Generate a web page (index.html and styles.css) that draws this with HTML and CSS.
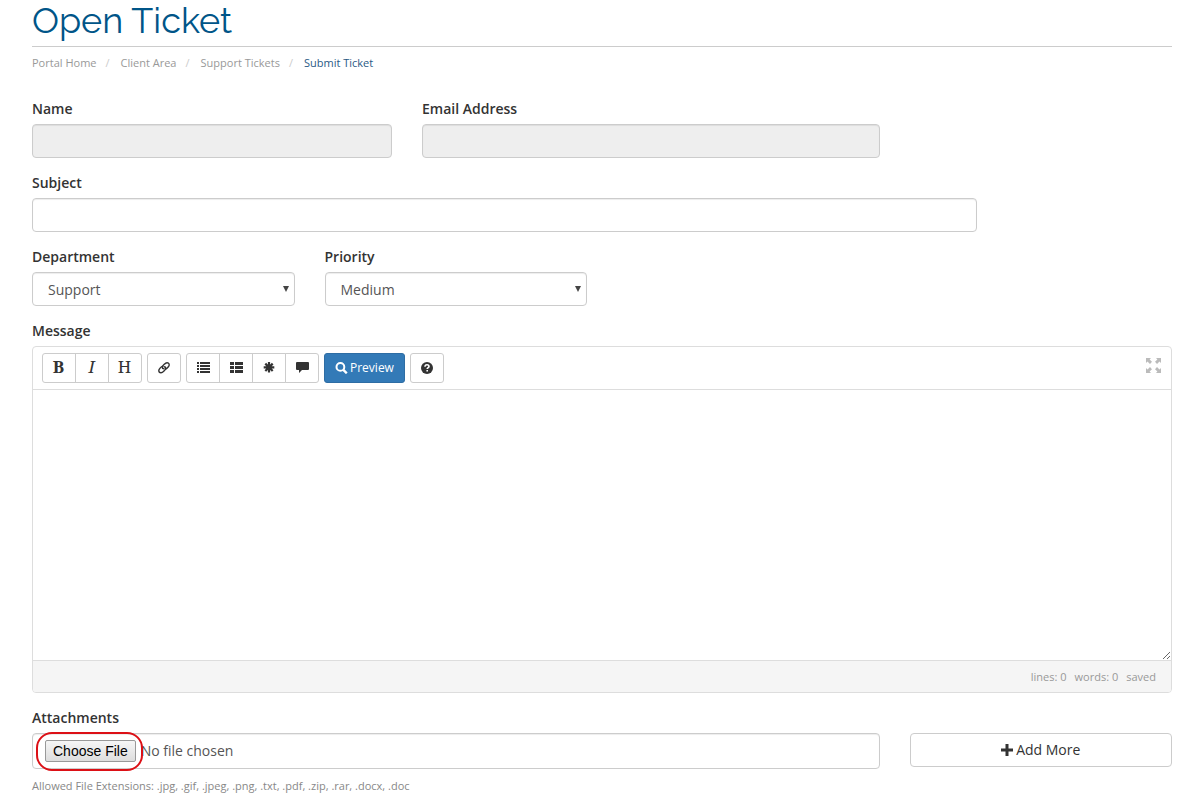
FILE: index.html
```html
<!DOCTYPE html>
<html lang="en">
<head>
    <meta charset="UTF-8">
    <meta name="viewport" content="width=device-width, initial-scale=1.0">
    <title>Open Ticket</title>
    <link rel="stylesheet" href="styles.css">
</head>
<body>

    <header class="page-header">
        <h1>Open Ticket</h1>
        <ol class="breadcrumb">
            <li><a href="#">Portal Home</a></li>
            <li><a href="#">Client Area</a></li>
            <li><a href="#">Support Tickets</a></li>
            <li class="active">Submit Ticket</li>
        </ol>
    </header>

    <form class="ticket-form">
        <div class="row">
            <div class="col-4">
                <label for="name">Name</label>
                <input type="text" id="name" class="form-control" disabled>
            </div>
            <div class="col-5">
                <label for="email">Email Address</label>
                <input type="email" id="email" class="form-control" disabled>
            </div>
        </div>

        <div class="row">
            <div class="col-10">
                <label for="subject">Subject</label>
                <input type="text" id="subject" class="form-control">
            </div>
        </div>

        <div class="row">
            <div class="col-3">
                <label for="department">Department</label>
                <div class="select">
                    <select id="department" class="form-control">
                        <option>Support</option>
                    </select>
                </div>
            </div>
            <div class="col-3">
                <label for="priority">Priority</label>
                <div class="select">
                    <select id="priority" class="form-control">
                        <option>High</option>
                        <option selected>Medium</option>
                        <option>Low</option>
                    </select>
                </div>
            </div>
        </div>

        <div class="message">
            <label for="message">Message</label>
            <div class="editor">
                <div class="editor-toolbar">
                    <div class="btn-group">
                        <button type="button" class="btn letter bold">B</button>
                        <button type="button" class="btn letter italic">I</button>
                        <button type="button" class="btn letter">H</button>
                    </div>
                    <div class="btn-group">
                        <button type="button" class="btn" aria-label="Link">
                            <svg class="icon" viewBox="0 0 12 12" fill="none" stroke="currentColor" stroke-width="1.4" stroke-linecap="round">
                                <path d="M7.8 7C9 6.6 11.2 4.2 11.2 2.9 11.2 1.6 10.2.7 9 .7 7.4.7 4.2 3.800 4.200 5.200c0 1.100.9 1.600 1.800 1.600"/>
                                <path d="M4.2 4.4C3 4.8.8 7.200.8 8.600c0 1.300 1 2.200 2.200 2.200 1.600 0 4.800-3.100 4.800-4.500 0-1.100-.9-1.600-1.800-1.600"/>
                            </svg>
                        </button>
                    </div>
                    <div class="btn-group">
                        <button type="button" class="btn" aria-label="List">
                            <svg class="icon wide" viewBox="0 0 13 12" fill="currentColor">
                                <path d="M0 0h2v2H0zM3 0h10v2H3zM0 3h2v2H0zM3 3h10v2H3zM0 6h2v2H0zM3 6h10v2H3zM0 9h2v2H0zM3 9h10v2H3z"/>
                            </svg>
                        </button>
                        <button type="button" class="btn" aria-label="Ordered list">
                            <svg class="icon wide" viewBox="0 0 13 12" fill="currentColor">
                                <path d="M0 0h4v3H0zM5 0h8v3H5zM0 4h4v3H0zM5 4h8v3H5zM0 8h4v3H0zM5 8h8v3H5z"/>
                            </svg>
                        </button>
                        <button type="button" class="btn" aria-label="Code">
                            <svg class="icon" viewBox="0 0 12 12" fill="none" stroke="currentColor" stroke-width="2.2">
                                <path d="M6 0v10.6M.7 5.3h10.6M2.3 1.6L9.7 9M9.7 1.6L2.3 9"/>
                            </svg>
                        </button>
                        <button type="button" class="btn" aria-label="Quote">
                            <svg class="icon wide" viewBox="0 0 13 12" fill="currentColor">
                                <path d="M1 0h11q1 0 1 1v6q0 1-1 1H6l-3 3V8H1Q0 8 0 7V1q0-1 1-1z"/>
                            </svg>
                        </button>
                    </div>
                    <button type="button" class="btn btn-primary">
                        <svg class="icon wide" viewBox="0 0 12 12" fill="none" stroke="currentColor" stroke-width="2">
                            <circle cx="4.9" cy="4.9" r="3.9"/>
                            <path d="M7.6 7.6l3.7 3.7" stroke-width="2.4"/>
                        </svg>
                        Preview
                    </button>
                    <button type="button" class="btn" aria-label="Help">
                        <svg class="icon" viewBox="0 0 12 12">
                            <circle cx="6" cy="6" r="6" fill="currentColor"/>
                            <path d="M4 4.7C4 3.3 5 2.800 6 2.800s2 .6 2 1.700c0 1.200-1.800 1.200-1.800 2.600" fill="none" stroke="#fff" stroke-width="1.6"/>
                            <path d="M5.4 8H7v1.600H5.400z" fill="#fff"/>
                        </svg>
                    </button>
                    <button type="button" class="fullscreen" aria-label="Fullscreen">
                        <svg viewBox="0 0 15 15" fill="currentColor">
                            <path d="M0 0h5L3.600 1.400 6 3.800 4 6 1.500 3.500 0 5z"/>
                            <path d="M15 0v5l-1.500-1.500L11 6 9 3.800l2.400-2.400L10 0z"/>
                            <path d="M0 15v-5l1.500 1.500L4 9l2 2.200-2.400 2.400L5 15z"/>
                            <path d="M15 15h-5l1.400-1.400L9 11.200 11 9l2.500 2.500L15 10z"/>
                        </svg>
                    </button>
                </div>
                <textarea id="message"></textarea>
                <div class="editor-footer">
                    <span>lines: 0</span>
                    <span>words: 0</span>
                    <span>saved</span>
                </div>
            </div>
        </div>

        <div class="row">
            <div class="col-9">
                <label for="attachment">Attachments</label>
                <div class="file">
                    <input type="file" id="attachment" class="form-control">
                    <span class="highlight"></span>
                </div>
                <p class="help">Allowed File Extensions: .jpg, .gif, .jpeg, .png, .txt, .pdf, .zip, .rar, .docx, .doc</p>
            </div>
            <div class="col-3 add-more">
                <button type="button" class="btn btn-block">
                    <svg class="icon" viewBox="0 0 12 12" fill="currentColor">
                        <path d="M4.5 0h3v4.5H12v3H7.5V12h-3V7.5H0v-3h4.5z"/>
                    </svg>
                    Add More
                </button>
            </div>
        </div>
    </form>

</body>
</html>
```
FILE: styles.css
```css
* {
    box-sizing: border-box;
}

body {
    margin: 0;
    padding: 0 28px 0 32px;
    font-family: "Open Sans", Arial, sans-serif;
    font-size: 14px;
    line-height: 20px;
    color: #333;
    background-color: #fff;
}

h1 {
    margin: 0;
    padding-bottom: 6px;
    border-bottom: 1px solid #ccc;
    font-family: Raleway, Lato, sans-serif;
    font-size: 36px;
    font-weight: 400;
    line-height: 40px;
    color: #058;
}

.breadcrumb {
    display: flex;
    margin: 0 0 26px;
    padding: 6px 0 0;
    list-style: none;
    font-size: 11px;
}

.breadcrumb a {
    color: #999;
    text-decoration: none;
}

.breadcrumb .active {
    color: #2a5a85;
}

.breadcrumb li + li::before {
    content: "/";
    padding: 0 11px 0 9px;
    color: #ccc;
}

.ticket-form {
    display: flex;
    flex-direction: column;
    gap: 15px;
}

.row {
    display: grid;
    grid-template-columns: repeat(12, 1fr);
    column-gap: 30px;
}

.col-3 { grid-column: span 3; }
.col-4 { grid-column: span 4; }
.col-5 { grid-column: span 5; }
.col-9 { grid-column: span 9; }
.col-10 { grid-column: span 10; }

label {
    display: block;
    margin-bottom: 5px;
    font-weight: 600;
}

.form-control {
    display: block;
    width: 100%;
    height: 34px;
    padding: 6px 12px;
    border: 1px solid #ccc;
    border-radius: 4px;
    box-shadow: inset 0 1px 1px rgba(0, 0, 0, 0.075);
    background-color: #fff;
    font: inherit;
    color: #555;
}

.form-control:disabled {
    background-color: #eee;
}

.select {
    position: relative;
}

.select select {
    appearance: none;
    padding: 7px 15px 5px;
}

/* Dropdown arrow */
.select::after {
    content: "";
    position: absolute;
    top: 14px;
    right: 6px;
    border: 3px solid transparent;
    border-top: 6px solid #444;
    border-bottom: 0;
    pointer-events: none;
}

.editor {
    border: 1px solid #ddd;
    border-radius: 4px;
    overflow: hidden;
}

.editor-toolbar {
    display: flex;
    gap: 5px;
    padding: 6px 9px;
    border-bottom: 1px solid #ddd;
}

.btn-group {
    display: flex;
}

.btn {
    display: flex;
    align-items: center;
    justify-content: center;
    gap: 3px;
    min-width: 34px;
    height: 30px;
    padding: 0 9px;
    border: 1px solid #ccc;
    border-radius: 3px;
    background-color: #fff;
    font: inherit;
    font-size: 12px;
    color: #333;
    cursor: pointer;
}

.btn-group .btn + .btn {
    margin-left: -1px;
}

.btn-group .btn:not(:first-child) {
    border-top-left-radius: 0;
    border-bottom-left-radius: 0;
}

.btn-group .btn:not(:last-child) {
    border-top-right-radius: 0;
    border-bottom-right-radius: 0;
}

.btn-primary {
    gap: 2px;
    padding: 0 10px;
    border-color: #2e6da4;
    background-color: #337ab7;
    color: #fff;
}

.btn.letter {
    padding: 0 8px 2px 7px;
    font-family: "Noto Serif", "Liberation Serif", serif;
    font-size: 17px;
}

.bold {
    font-weight: bold;
}

.italic {
    font-style: italic;
}

.icon {
    flex: none;
    width: 12px;
    height: 12px;
}

.icon.wide {
    width: 13px;
}

.fullscreen {
    width: 15px;
    height: 15px;
    margin: 5px 1px 0 auto;
    padding: 0;
    border: 0;
    background: none;
    color: #bbb;
    cursor: pointer;
}

.fullscreen svg {
    display: block;
}

.editor textarea {
    display: block;
    width: 100%;
    height: 270px;
    padding: 10px;
    border: 0;
    outline: 0;
    font: inherit;
    resize: vertical;
}

.editor-footer {
    display: flex;
    justify-content: flex-end;
    gap: 8px;
    padding: 6px 15px 5px;
    border-top: 1px solid #ddd;
    background-color: #f5f5f5;
    font-size: 11px;
    color: #999;
}

.file {
    position: relative;
}

.file .form-control {
    height: 36px;
}

.form-control::file-selector-button {
    height: 22px;
    margin-right: 5px;
    padding: 0 7px;
    border: 1px solid #999;
    border-radius: 2px;
    background: linear-gradient(#f6f6f6, #ddd);
    font-family: "Liberation Sans", Arial, sans-serif;
    font-size: 14px;
    color: #000;
}

/* Red ring round the file button */
.highlight {
    position: absolute;
    top: -1px;
    left: 4px;
    width: 107px;
    height: 39px;
    border: 2px solid #dc1016;
    border-radius: 16px;
    pointer-events: none;
}

.help {
    margin: 7px 0 0;
    font-size: 11px;
    color: #888;
}

.add-more {
    padding-top: 25px;
}

.btn-block {
    width: 100%;
    height: 34px;
    border-radius: 4px;
    font-size: 14px;
}
```
